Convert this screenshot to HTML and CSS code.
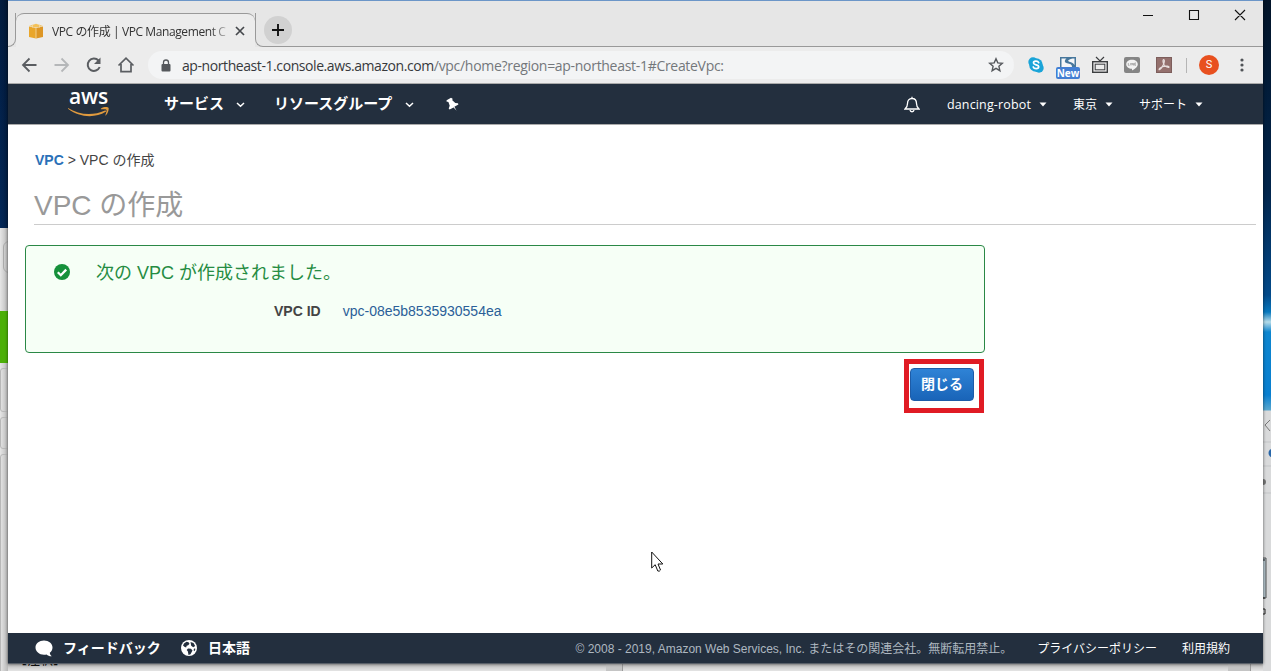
FILE: index.html
```
<!DOCTYPE html>
<html lang="ja">
<head>
    <meta charset="UTF-8">
    <meta name="viewport" content="width=device-width, initial-scale=1.0">
    <title>VPC の作成 | VPC Management Console</title>

    <link rel="stylesheet" href="styles.css">
</head>
<body>
    <!-- Desktop behind the browser -->
    <div class="desktop-left">
        <div class="back-tab"></div>
        <div class="back-green"></div>
        <div class="back-box box-1"></div>
        <div class="back-box box-2"></div>
        <div class="back-box box-3"></div>
    </div>
    <div class="desktop-right">
        <svg width="8" height="260" viewBox="0 0 8 260">
            <path d="M7 9L2 14l5 6" fill="none" stroke="#777"/>
            <path d="M0 31h8M0 55h8M0 82h8" stroke="#c3c5c7"/>
            <circle cx="10" cy="42" r="4.5" fill="#2866a8"/>
            <circle cx="0" cy="71" r="3" fill="#777"/>
            <path d="M0 147h3v40H0" fill="#b4c4cc" stroke="#555"/>
            <path d="M0 149h2M0 187h2M0 198h2v5H0" stroke="#222" fill="none"/>
        </svg>
    </div>
    <div class="desktop-bottom">
        <span class="back-text">【注釈】</span>
        <span class="back-scroll scroll-1"></span>
        <span class="back-scroll scroll-2"></span>
    </div>

    <div class="window">
        <div class="tab-bar">
            <div class="tab-edge"></div>
            <div class="tab">
                <svg class="tab-icon" width="16" height="16" viewBox="0 0 16 16">
                    <path d="M1 3.500L8 5v10.500L1 14z" fill="#e9a62b"/>
                    <path d="M15 3.500L8 5v10.500L15 14z" fill="#dd9625"/>
                    <path d="M1 3L8 .8 15 3 8 4.600z" fill="#f3c15a"/>
                    <path d="M8 4.500v11M4.500 1.500v3M11.500 1.500v3" stroke="#f6dca6" stroke-width=".8"/>
                </svg>
                <span class="tab-title">VPC の作成 | VPC Management C</span>
                <svg class="tab-close" width="10" height="10" viewBox="0 0 10 10">
                    <path d="M1 1l8 8M9 1L1 9" stroke="#45484c" stroke-width="1.700"/>
                </svg>
            </div>
            <div class="tab-rest">
                <div class="new-tab">
                    <svg width="12" height="12" viewBox="0 0 12 12">
                        <path d="M6 0v12M0 6h12" stroke="#111" stroke-width="1.900"/>
                    </svg>
                </div>
                <svg class="window-buttons" width="103" height="12" viewBox="0 0 103 12">
                    <path d="M0 6.500h10M46.500 1.500h9v9h-9zM92 1l10 10M102 1L92 11" fill="none" stroke="#111" stroke-width="1.100"/>
                </svg>
            </div>
        </div>

        <div class="toolbar">
            <svg class="nav-icons" width="114" height="20" viewBox="0 0 114 20" fill="none" stroke-width="1.800">
                <path d="M15.500 10H2.500M8.500 3.500L2 10l6.500 6.500" stroke="#5a5d61"/>
                <path d="M33.500 10h13M40.500 3.500L47 10l-6.500 6.500" stroke="#b5b7b9"/>
                <path d="M77.500 5.500A6.200 6.200 0 1 0 78.700 12" stroke="#5a5d61" stroke-width="2"/>
                <path d="M79.500 2.500v6.500H73z" fill="#5a5d61"/>
                <path d="M97.500 10.500L105 3.200l7.500 7.300M100 9v7.600h10V9" stroke="#5a5d61" stroke-width="1.700"/>
            </svg>
            <div class="address">
                <svg width="10" height="13" viewBox="0 0 10 13">
                    <rect x=".5" y="5" width="9" height="7.500" rx="1" fill="#55585c"/>
                    <path d="M2.500 5.500V3.500a2.500 2.500 0 0 1 5 0v2" fill="none" stroke="#55585c" stroke-width="1.300"/>
                </svg>
                <span class="url">ap-northeast-1.console.aws.amazon.com<span class="url-path">/vpc/home?region=ap-northeast-1#CreateVpc:</span></span>
                <svg class="star" width="16" height="16" viewBox="0 0 16 16">
                    <path d="M8 1.800l1.800 4.100 4.500.4-3.400 3 1 4.400L8 11.400l-3.900 2.300 1-4.400-3.400-3 4.500-.4z" fill="none" stroke="#55585c" stroke-width="1.400"/>
                </svg>
            </div>
            <div class="extensions">
                <svg width="16" height="16" viewBox="0 0 16 16">
                    <circle cx="5" cy="5" r="4.700" fill="#1aa4d8"/>
                    <circle cx="11" cy="11" r="4.700" fill="#1aa4d8"/>
                    <circle cx="8" cy="8" r="6.800" fill="#1aa4d8"/>
                    <path d="M10.700 5.700C9.700 3.500 5.400 3.800 5.500 6c.1 2.400 5.200 1.300 5.200 3.800 0 2.400-4.600 2.500-5.500.2" fill="none" stroke="#fff" stroke-width="1.700" stroke-linecap="round"/>
                </svg>
                <div class="ext-new">
                    <svg width="16" height="12" viewBox="0 0 16 12">
                        <rect width="16" height="12" fill="#47779c"/>
                        <path d="M1.500 1.500h5C4.500 3 4 5.500 7 6.200c3 .6 5 1 5 3.800H1.500z" fill="#f4f6f8"/>
                        <path d="M8 3.800C9 2 12 1.500 14.500 1.500V8C13 5 9 5.500 8 3.800z" fill="#f4f6f8"/>
                    </svg>
                    <span class="new-badge">New</span>
                </div>
                <svg width="18" height="18" viewBox="0 0 18 18" fill="none" stroke="#3c3e40">
                    <path d="M5 1l4 4 4-4" stroke-width="1.200"/>
                    <rect x="1.700" y="5.700" width="14.600" height="10.600" stroke-width="1.400"/>
                    <rect x="4.200" y="8.200" width="9.600" height="5.600"/>
                </svg>
                <svg width="16" height="16" viewBox="0 0 16 16">
                    <rect width="16" height="16" rx="2" fill="#858585"/>
                    <path d="M8 2.700c3.400 0 5.800 2 5.800 4.600 0 3-3.500 5-5.800 6.200v-1.700c-3.400 0-5.800-1.900-5.800-4.500S4.600 2.700 8 2.700z" fill="#f2f2f2"/>
                    <path d="M4.300 6v2.300h1.300M6.700 6v2.300M7.900 8.300V6l1.500 2.300V6M12 6h-1.300v2.300H12M10.700 7.200h1" fill="none" stroke="#858585" stroke-width=".6"/>
                </svg>
                <svg width="16" height="16" viewBox="0 0 16 16">
                    <rect x=".5" y=".5" width="15" height="15" fill="#94706d" stroke="#7d5e5c"/>
                    <path d="M7.500 2.500c1.500 0 .8 3.500-.3 5.500-1.500 3-3 4.500-4 4.800-.8-.8 2-2.800 4.500-3.300s5.500-.5 5.300.7c-.6.800-3.500-.5-4.800-2.200C7 6 6.500 3 7.500 2.500z" fill="none" stroke="#e7dedd" stroke-width="1.200"/>
                </svg>
                <span class="divider"></span>
                <span class="avatar">S</span>
                <svg class="menu" width="4" height="14" viewBox="0 0 4 14" fill="#505357">
                    <circle cx="2" cy="2" r="1.600"/><circle cx="2" cy="7" r="1.600"/><circle cx="2" cy="12" r="1.600"/>
                </svg>
            </div>
        </div>

        <header class="aws-nav">
            <div class="logo">
                <span>aws</span>
                <svg width="42" height="11" viewBox="0 0 42 11">
                    <path d="M0 1c11 7 25 8 37 2.500 1-.4 1.600.6.700 1.300C27 11.500 11 10.500 0 1.800z" fill="#e09a3e"/>
                    <path d="M33 1.500c3-2 7-1.500 7.500-.7.600 1-.3 5.500-2.500 7.500-.5.400-.9.100-.6-.4.800-1.800 1.500-4.500 1-5.200-.5-.6-3.200-.6-5-.4-.6 0-.8-.4-.4-.8z" fill="#e09a3e"/>
                </svg>
            </div>
            <div class="nav-item services"><span>サービス</span>
                <svg width="9" height="6" viewBox="0 0 9 6"><path d="M1 1l3.500 3.300L8 1" fill="none" stroke="#fff" stroke-width="1.500"/></svg>
            </div>
            <div class="nav-item groups"><span>リソースグループ</span>
                <svg width="9" height="6" viewBox="0 0 9 6"><path d="M1 1l3.500 3.300L8 1" fill="none" stroke="#fff" stroke-width="1.500"/></svg>
            </div>
            <svg class="pin" width="13" height="15" viewBox="0 0 13 15">
                <path d="M5 .8l1.600 1-.3 1.500 3 2.700 2.700.2.400 1.400-4 2.200 2.200 4-3-3.400-4 2-.9-1 1-2.700-1.300-3.600L.5 4.600.600 3.200z" fill="#fff"/>
            </svg>
            <svg class="bell" width="16" height="17" viewBox="0 0 16 17" fill="none" stroke="#fff" stroke-width="1.300">
                <path d="M8 .8v1.500M1 13c2-1.500 2.500-3 2.500-5.500C3.500 4.500 5 2.500 8 2.500s4.500 2 4.500 5c0 2.500.5 4 2.500 5.500zM6 14c.3 2.300 3.700 2.300 4 0"/>
            </svg>
            <div class="nav-item account"><span>dancing-robot</span>
                <svg width="8" height="5" viewBox="0 0 8 5"><path d="M.5.500h7L4 4.500z" fill="#fff"/></svg>
            </div>
            <div class="nav-item region"><span>東京</span>
                <svg width="8" height="5" viewBox="0 0 8 5"><path d="M.5.500h7L4 4.500z" fill="#fff"/></svg>
            </div>
            <div class="nav-item support"><span>サポート</span>
                <svg width="8" height="5" viewBox="0 0 8 5"><path d="M.5.500h7L4 4.500z" fill="#fff"/></svg>
            </div>
        </header>

        <main>
            <div class="breadcrumb"><a>VPC</a> &gt; VPC の作成</div>
            <h1>VPC の作成</h1>
            <div class="result">
                <div class="message">
                    <svg width="16" height="16" viewBox="0 0 16 16">
                        <circle cx="8" cy="8" r="8" fill="#16913b"/>
                        <path d="M3.800 8.200l3 3 5.400-5.600" fill="none" stroke="#fff" stroke-width="2.300"/>
                    </svg>
                    <span>次の VPC が作成されました。</span>
                </div>
                <div class="vpc-row">
                    <span class="label">VPC ID</span>
                    <a class="vpc-link">vpc-08e5b8535930554ea</a>
                </div>
            </div>
            <div class="actions">
                <div class="highlight">
                    <button>閉じる</button>
                </div>
            </div>
        </main>

        <footer>
            <svg width="18" height="17" viewBox="0 0 18 17">
                <path d="M9 .5c4.800 0 8.500 3 8.500 7 0 2.300-1 4-2.700 5.300.1 1.500.8 2.500 2 3.400-2.300.1-4-.7-5.200-1.800-.8.200-1.700.3-2.600.3-4.800 0-8.500-3.200-8.500-7.200s3.700-7 8.500-7z" fill="#fff"/>
            </svg>
            <span class="feedback">フィードバック</span>
            <svg width="16" height="16" viewBox="0 0 16 16">
                <circle cx="8" cy="8" r="8" fill="#fff"/>
                <path d="M3 3.500l2.500-1.700 2 .4 1 1.500-1.300 1.500-1.500.6-.6 1.700-1.700-.8L2 5.500zM9.500 2l3 1 1.700 3-2 1.200-2-1.400zM7 8.500l3 .3 1.500 1.700-2 3.700-2 .8-.6-3.500-1.200-1.400zM13 8.500l1.500.3-.9 2.400-1-.9z" fill="#232f3e"/>
            </svg>
            <span class="language">日本語</span>
            <span class="copyright">© 2008 - 2019, Amazon Web Services, Inc. またはその関連会社。無断転用禁止。</span>
            <span class="privacy">プライバシーポリシー</span>
            <span class="terms">利用規約</span>
        </footer>
    </div>

    <svg class="cursor" width="13" height="21" viewBox="0 0 13 21">
        <path d="M.7 1v16l3.500-3.300L6.800 20q1.700.8 2.700-1L7 13h4.800z" fill="#fff" stroke="#111"/>
    </svg>
</body>
</html>
```
FILE: styles.css
```
* {
    box-sizing: border-box;
}

body {
    margin: 0;
    height: 671px;
    position: relative;
    overflow: hidden;
    background: #e2e2e2;
    font-family: "Liberation Sans", "Noto Sans CJK JP", sans-serif;
}

svg {
    display: block;
    flex-shrink: 0;
}

/* desktop */
.desktop-left {
    position: absolute;
    left: 0;
    top: 0;
    width: 8px;
    height: 671px;
    overflow: hidden;
    background: linear-gradient(90deg, transparent, rgba(0, 0, 0, .2)), linear-gradient(#021c3f 0, #03285a 228px, #e6e6e6 228px);
}

.back-tab {
    position: absolute;
    left: 3px;
    top: 241px;
    width: 20px;
    height: 32px;
    border: 1px solid #aaa;
    border-radius: 6px;
}

.back-green {
    position: absolute;
    top: 311px;
    width: 8px;
    height: 52px;
    background: #4caf08;
}

.back-box {
    position: absolute;
    left: 0;
    width: 20px;
    border: 1px solid #b8b8b8;
    border-radius: 3px;
}

.box-1 {
    top: 368px;
    height: 44px;
}

.box-2 {
    top: 417px;
    height: 32px;
}

.box-3 {
    top: 454px;
    height: 230px;
}

.desktop-right {
    position: absolute;
    right: 0;
    top: 0;
    width: 8px;
    height: 671px;
    padding-top: 411px;
    background: linear-gradient(#021429 0, #02254c 190px, #034a8a 295px, #0878bd 312px, #b5dbe8 322px, #0d86d0 332px, #087fd0 395px, #5aa8cf 410px, #d9dadb 411px);
}

.desktop-bottom {
    position: absolute;
    left: 8px;
    right: 8px;
    bottom: 0;
    height: 24px;
    background: linear-gradient(#b4b4b4 16px, #e4e4e4);
}

.back-text {
    position: absolute;
    left: 6px;
    top: 5px;
    font-size: 13px;
    line-height: 16px;
    color: #111;
}

.back-scroll {
    position: absolute;
    bottom: 0;
    width: 17px;
    height: 8px;
    background: #c4c4c4;
    border-right: 1px solid #999;
}

.scroll-1 {
    left: 598px;
}

.scroll-2 {
    left: 1220px;
    width: 23px;
}

/* browser window */
.window {
    position: relative;
    display: flex;
    flex-direction: column;
    width: 1255px;
    height: 664px;
    margin: 0 8px;
    background: #fff;
    border-top: 1px solid #6c96c8;
    border-bottom: 1px solid #596069;
    box-shadow: 0 0 3px rgba(0, 0, 0, .6);
}

.tab-bar {
    display: flex;
    height: 46px;
    padding-top: 12px;
    background: #e6e6e6;
}

.tab-edge {
    width: 8px;
    height: 34px;
    border-bottom: 1px solid #999;
    border-right: 1px solid #999;
    border-bottom-right-radius: 8px;
}

.tab {
    display: flex;
    align-items: center;
    width: 239px;
    height: 34px;
    padding-left: 12px;
    background: #ececec;
    border-top: 1px solid #999;
    border-radius: 8px 8px 0 0;
}

.tab-title {
    width: 176px;
    margin-left: 8px;
    white-space: nowrap;
    font: 12px "Open Sans", "Noto Sans CJK JP", sans-serif;
    letter-spacing: -.4px;
    color: #333;
    -webkit-mask-image: linear-gradient(90deg, #000 158px, transparent 180px);
}

.tab-close {
    margin-left: 7px;
}

.tab-rest {
    display: flex;
    flex: 1;
    height: 34px;
    border-left: 1px solid #999;
    border-bottom: 1px solid #999;
    border-bottom-left-radius: 8px;
}

.new-tab {
    display: flex;
    align-items: center;
    justify-content: center;
    width: 28px;
    height: 28px;
    margin: 3px 0 0 8px;
    background: #d1d1d1;
    border-radius: 50%;
}

.window-buttons {
    margin: -4px 17px 0 auto;
}

.toolbar {
    display: flex;
    align-items: center;
    height: 37px;
    padding-left: 13px;
    background: #ececec;
    border-bottom: 1px solid #aaa;
}

.address {
    display: flex;
    align-items: center;
    width: 866px;
    height: 28px;
    margin-left: 13px;
    padding: 0 10px 0 13px;
    background: #f3f4f5;
    border-radius: 14px;
}

.url {
    margin-left: 11px;
    font: 14px "Open Sans", sans-serif;
    letter-spacing: -.42px;
    white-space: nowrap;
    color: #37393c;
}

.url-path {
    letter-spacing: -.3px;
    color: #73777b;
}

.star {
    margin-left: auto;
}

.extensions {
    display: flex;
    align-items: center;
    margin-left: 14px;
}

.ext-new {
    display: flex;
    flex-direction: column;
    align-items: center;
    width: 24px;
    margin: 5px 11px 0 12px;
}

.new-badge {
    width: 24px;
    height: 12px;
    margin-top: -2px;
    background: #437fd3;
    border-radius: 2px;
    color: #fff;
    font: bold 10px/12px "Open Sans", sans-serif;
    text-align: center;
}

.extensions > svg + svg {
    margin-left: 16px;
}

.extensions > .ext-new + svg + svg {
    margin-left: 15px;
}

.divider {
    width: 1px;
    height: 15px;
    margin: 0 12px 0 14px;
    background: #b5b5b5;
}

.avatar {
    width: 20px;
    height: 20px;
    border-radius: 50%;
    background: #e8501f;
    color: #fff;
    font: 11px/20px Roboto, sans-serif;
    text-align: center;
}

.menu {
    margin-left: 21px;
}

.aws-nav {
    display: flex;
    align-items: center;
    height: 41px;
    background: #232f3e;
    border-bottom: 1px solid #aaa;
    color: #fff;
}

.logo {
    width: 42px;
    margin: -3px 0 0 60px;
}

.logo span {
    display: block;
    height: 20px;
    padding-left: 1px;
    font: 600 21px/18px "Open Sans", sans-serif;
    letter-spacing: -.2px;
}

.nav-item {
    display: flex;
    align-items: center;
    white-space: nowrap;
    font-size: 12px;
}

.services,
.groups {
    font-size: 15px;
    font-weight: bold;
}

.services span,
.groups span {
    margin-top: -3px;
}

.services svg,
.groups svg {
    margin-top: 2px;
}

.services {
    gap: 12px;
    margin-left: 54px;
}

.groups {
    gap: 13px;
    margin-left: 29px;
}

.pin {
    margin-left: 32px;
}

.bell {
    margin-left: auto;
}

.account {
    margin-left: 27px;
    font-family: "Open Sans", sans-serif;
}

.account span {
    width: 92px;
    font-size: 12.500px;
    letter-spacing: .15px;
}

.region span,
.support span {
    margin-top: -2px;
}

.region {
    gap: 8px;
    margin-left: 26px;
}

.support {
    gap: 8px;
    margin: 0 60px 0 26px;
}

main {
    flex: 1;
    padding: 25px 7px 0 17px;
}

.breadcrumb {
    height: 20px;
    margin-left: 10px;
    font-size: 14px;
    line-height: 20px;
    color: #444;
}

.breadcrumb a {
    font-weight: bold;
    color: #2a70b8;
}

h1 {
    height: 41px;
    margin: 14px 0 20px 9px;
    border-bottom: 1px solid #ccc;
    font-size: 28px;
    font-weight: normal;
    line-height: 44px;
    color: #999;
}

.result {
    width: 960px;
    height: 108px;
    padding: 14px 28px;
    background: #f6fff6;
    border: 1px solid #2a8846;
    border-radius: 4px;
}

.message {
    display: flex;
    align-items: center;
    height: 24px;
    gap: 26px;
    font-size: 18px;
    color: #258c42;
}

.message span {
    margin-top: -2px;
}

.vpc-row {
    display: flex;
    gap: 22px;
    margin: 18px 0 0 220px;
    font-size: 14px;
    line-height: 18px;
}

.label {
    font-weight: bold;
    color: #444;
}

.vpc-link {
    color: #2a6098;
}

.actions {
    display: flex;
    justify-content: flex-end;
    width: 959px;
    margin-top: 6px;
}

.highlight {
    width: 80px;
    height: 54px;
    padding: 4px 1px;
    border: 5px solid #e01b24;
}

button {
    display: block;
    width: 64px;
    height: 33px;
    padding: 0 0 4px;
    border: 1px solid #1d5ca8;
    border-radius: 4px;
    background: linear-gradient(#2f83d6, #1964b8);
    color: #fff;
    font: bold 14px "Noto Sans CJK JP", sans-serif;
}

footer {
    display: flex;
    align-items: center;
    height: 30px;
    padding-left: 27px;
    background: #232f3e;
    color: #fff;
    white-space: nowrap;
}

footer span {
    padding-bottom: 2px;
}

.feedback {
    width: 98px;
    margin: 0 20px 0 10px;
    font-size: 14px;
    font-weight: bold;
}

.language {
    margin-left: 11px;
    font-size: 14px;
    font-weight: bold;
}

.copyright {
    margin-left: auto;
    font-size: 12px;
    color: #aeb8c0;
}

.privacy {
    margin-left: 25px;
    font-size: 12px;
}

.terms {
    margin: 0 33px 0 25px;
    font-size: 12px;
}

.cursor {
    position: absolute;
    left: 651px;
    top: 551px;
}
```
